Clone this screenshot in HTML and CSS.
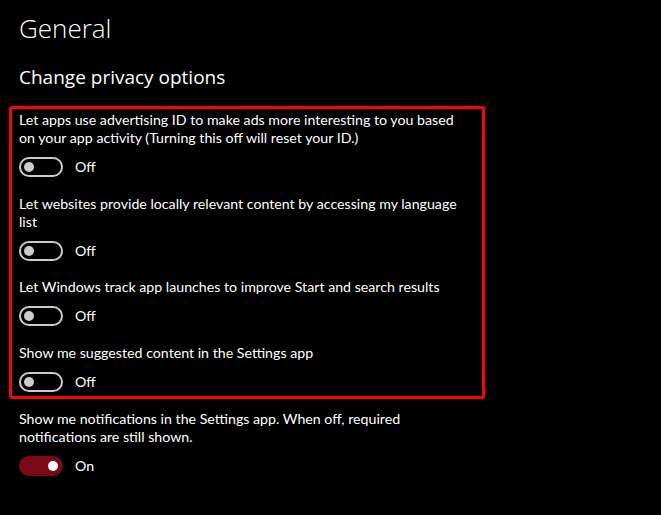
FILE: index.html
```html
<!DOCTYPE html>
<html lang="en">
<head>
<meta charset="utf-8">
<title>General</title>
<link rel="stylesheet" href="styles.css">
</head>
<body>
<div class="page">
  <h1 class="title">General</h1>
  <h2 class="subtitle">Change privacy options</h2>
  <div class="highlight">
    <div class="setting">
      <p class="desc">Let apps use advertising ID to make ads more interesting to you based on your app activity (Turning this off will reset your ID.)</p>
      <div class="switch-row">
        <span class="switch"><span class="thumb"></span></span>
        <span class="state">Off</span>
      </div>
    </div>
    <div class="setting">
      <p class="desc">Let websites provide locally relevant content by accessing my language list</p>
      <div class="switch-row">
        <span class="switch"><span class="thumb"></span></span>
        <span class="state">Off</span>
      </div>
    </div>
    <div class="setting">
      <p class="desc">Let Windows track app launches to improve Start and search results</p>
      <div class="switch-row">
        <span class="switch"><span class="thumb"></span></span>
        <span class="state">Off</span>
      </div>
    </div>
    <div class="setting">
      <p class="desc">Show me suggested content in the Settings app</p>
      <div class="switch-row">
        <span class="switch"><span class="thumb"></span></span>
        <span class="state">Off</span>
      </div>
    </div>
  </div>
  <div class="setting outside">
    <p class="desc">Show me notifications in the Settings app. When off, required notifications are still shown.</p>
    <div class="switch-row">
      <span class="switch on"><span class="thumb"></span></span>
      <span class="state">On</span>
    </div>
  </div>
</div>
</body>
</html>
```
FILE: styles.css
```css
html, body {
  margin: 0;
  padding: 0;
  background: #000;
  color: #fff;
  font-family: "Lato", "Noto Sans", sans-serif;
}

.page {
  padding: 10px 0 0 9px;
  width: 476px;
}

.title {
  margin: 0;
  padding-left: 10px;
  font-family: "Open Sans", "Noto Sans", sans-serif;
  font-weight: 300;
  font-size: 26px;
  line-height: 36px;
}

.subtitle {
  margin: 17px 0 15px;
  padding-left: 10px;
  font-family: "Open Sans", "Noto Sans", sans-serif;
  font-weight: 400;
  font-size: 19px;
  line-height: 28px;
}

.highlight {
  border: 3px solid #ff0000;
  border-radius: 3px;
  padding: 2px 0 4px 7px;
  display: flex;
  flex-direction: column;
  gap: 17.5px;
}

.setting {
  display: flex;
  flex-direction: column;
  gap: 10px;
}

.outside {
  margin-top: 11px;
  padding-left: 10px;
}

.desc {
  margin: 0;
  width: 446px;
  font-size: 14.2px;
  line-height: 18px;
}

.switch-row {
  display: flex;
  align-items: center;
  gap: 12px;
}

.switch {
  box-sizing: border-box;
  width: 44px;
  height: 20px;
  border: 2px solid #cccccc;
  border-radius: 10px;
  display: flex;
  align-items: center;
  padding: 0 3px;
}

.thumb {
  width: 10px;
  height: 10px;
  border-radius: 50%;
  background: #cccccc;
}

.switch.on {
  background: #7a0b15;
  border-color: #7a0b15;
  justify-content: flex-end;
}

.switch.on .thumb {
  background: #fff;
}

.state {
  font-size: 14.2px;
  line-height: 20px;
}
```
